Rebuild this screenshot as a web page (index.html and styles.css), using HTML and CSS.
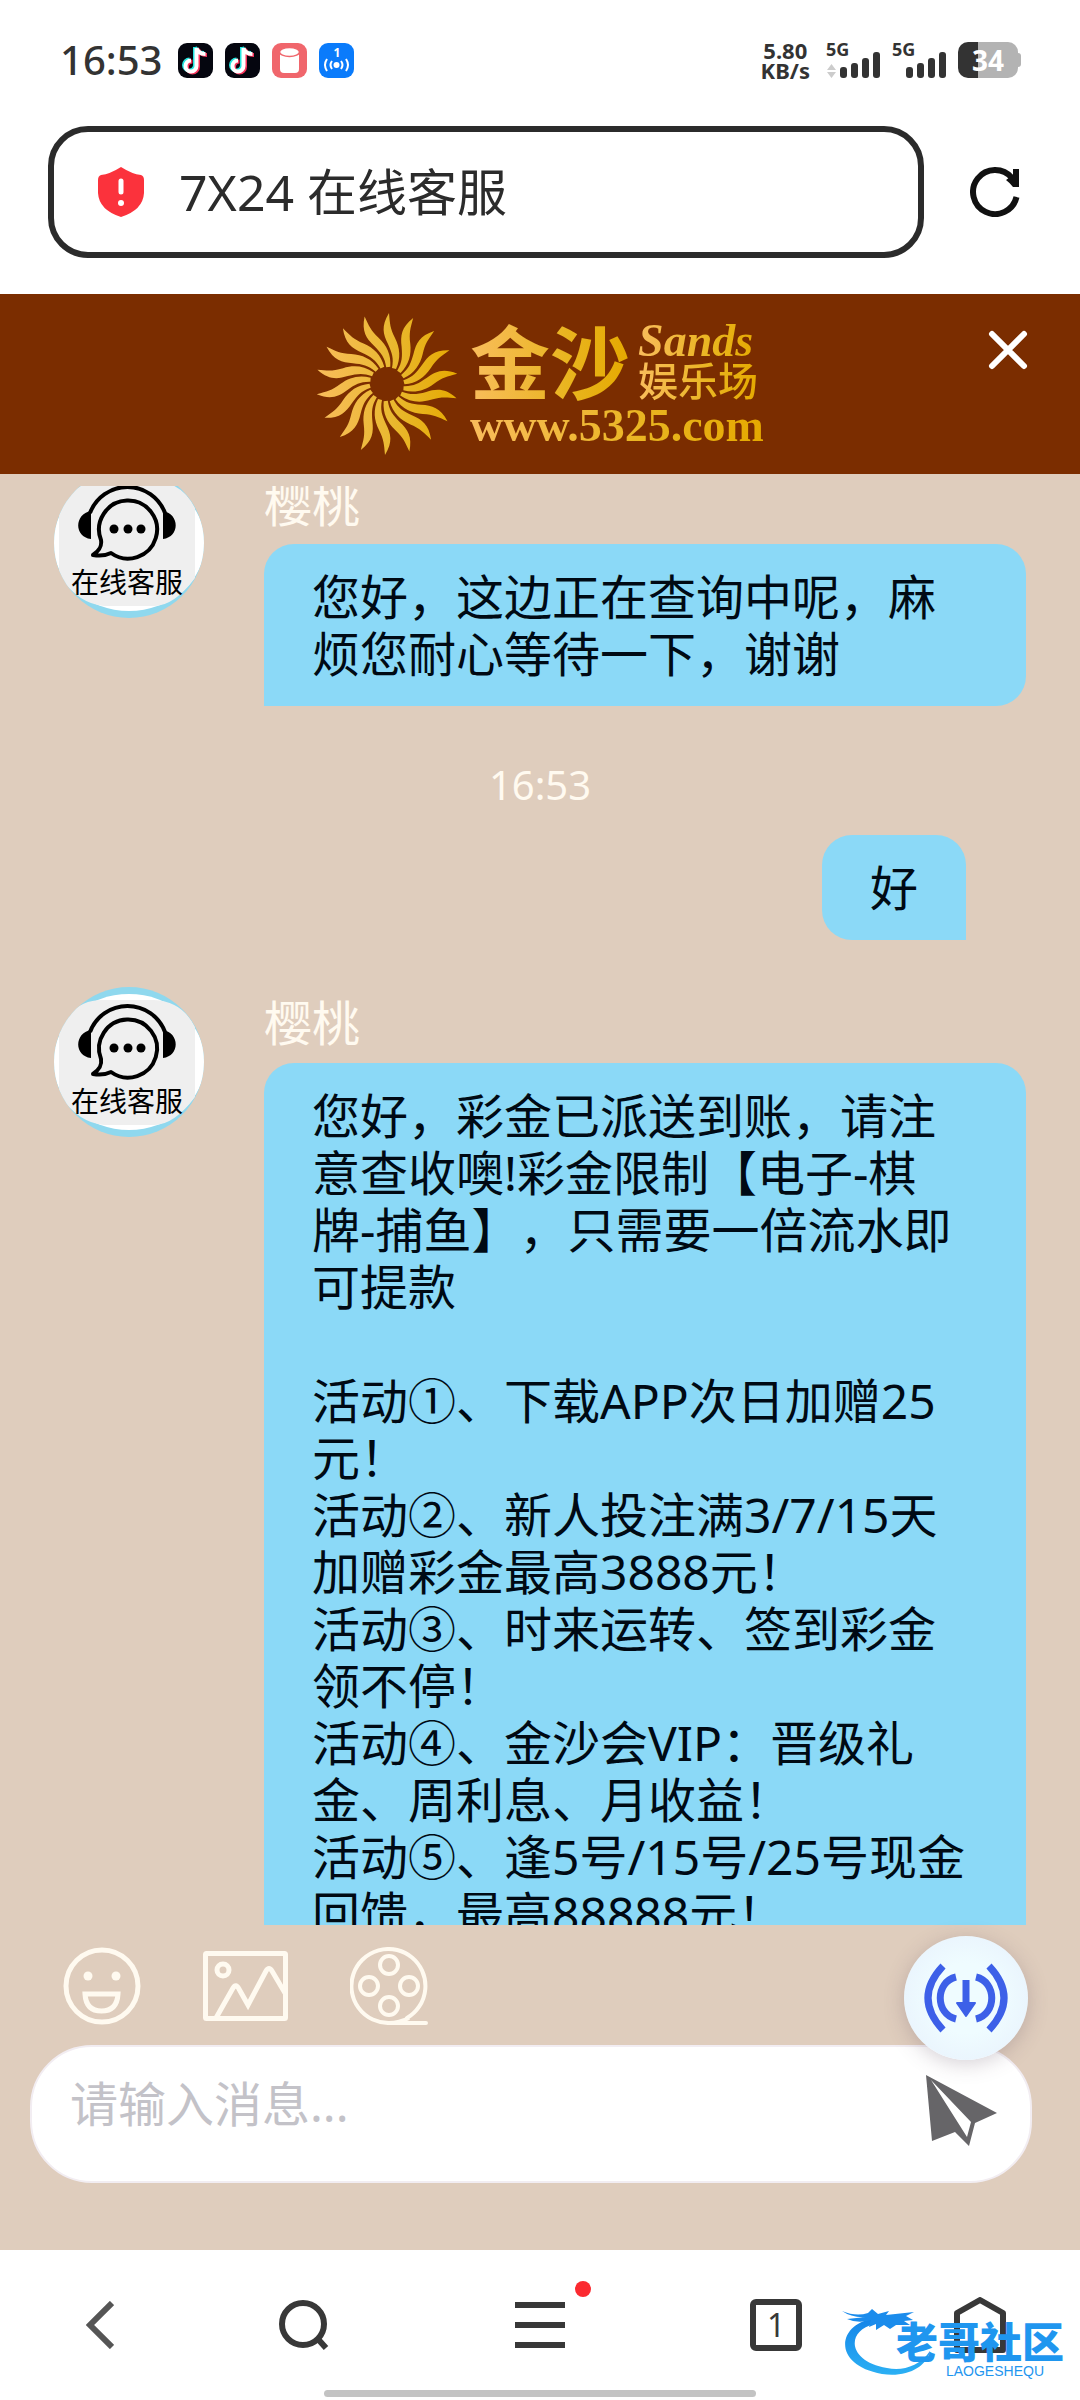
FILE: index.html
```html
<!DOCTYPE html>
<html lang="zh-CN">
<head>
  <meta charset="UTF-8" />
  <meta name="viewport" content="width=device-width, initial-scale=1.0"/>
  <title>7X24 在线客服</title>
  <link rel="stylesheet" href="styles.css">
</head>
<body>

<!-- Shared shapes -->
<svg class="defs" width="0" height="0" aria-hidden="true">
  <defs>
    <symbol id="douyin" viewBox="0 0 35 35">
      <rect width="35" height="35" rx="9" fill="#05060f"/>
      <g fill="none" stroke-width="4">
        <path d="M18 5v18a5.500 5.500 0 1 1-5.500-5.500M18 5c1 4 4 6 9 6" stroke="#25e6e0" transform="translate(-1 -1)"/>
        <path d="M18 5v18a5.500 5.500 0 1 1-5.500-5.500M18 5c1 4 4 6 9 6" stroke="#f6345c" transform="translate(2 1)"/>
        <path d="M18 5v18a5.500 5.500 0 1 1-5.500-5.500M18 5c1 4 4 6 9 6" stroke="#fff" transform="translate(.5 0)"/>
      </g>
    </symbol>

    <symbol id="bars" viewBox="0 0 40 26">
      <g fill="#333">
        <rect x="0" y="15" width="7" height="11" rx="3"/>
        <rect x="11" y="11" width="7" height="15" rx="3"/>
        <rect x="22" y="6" width="7" height="20" rx="3"/>
        <rect x="33" y="0" width="7" height="26" rx="3"/>
      </g>
    </symbol>

    <clipPath id="round"><circle cx="75" cy="75" r="75"/></clipPath>
    <symbol id="agent" viewBox="0 0 150 150">
      <g clip-path="url(#round)">
        <rect width="150" height="150" fill="#8fd8ee"/>
        <ellipse cx="75" cy="75" rx="76" ry="68" fill="#fff"/>
        <path d="M5 40Q22 12 50 13H100Q128 14 141 40V110Q120 138 100 138H50Q25 136 5 108Z" fill="#efefef"/>
      </g>
      <path d="M36 45A40 40 0 0 1 111 45" fill="none" stroke="#000" stroke-width="4"/>
      <path d="M37 43V71C20 69 20 46 37 43ZM109 43V71C126 69 126 46 109 43Z"/>
      <path d="M47 72A29 29 0 1 1 57 85C51 88 45 88 39 87C46 82 48 78 47 72Z" fill="none" stroke="#000" stroke-width="4" stroke-linejoin="round"/>
      <circle cx="60" cy="61" r="4.500"/><circle cx="74" cy="61" r="4.500"/><circle cx="87" cy="61" r="4.500"/>
      <text class="agent-text" x="73" y="125" text-anchor="middle">在线客服</text>
    </symbol>

    <path id="ray" d="M2-71C-6-58-4-50 1-40C5-31 7-26 5-16L9-15C14-26 13-36 8-46C3-56 3-60 2-71Z" fill="#fff"/>
    <linearGradient id="gold">
      <stop offset="0" stop-color="#f9bd5c"/>
      <stop offset=".5" stop-color="#eab933"/>
      <stop offset="1" stop-color="#e5a900"/>
    </linearGradient>
    <mask id="rays" maskUnits="userSpaceOnUse" x="-71" y="-72" width="142" height="144">
      <use href="#ray"/>
      <use href="#ray" transform="rotate(20)"/>
      <use href="#ray" transform="rotate(40)"/>
      <use href="#ray" transform="rotate(60)"/>
      <use href="#ray" transform="rotate(80)"/>
      <use href="#ray" transform="rotate(100)"/>
      <use href="#ray" transform="rotate(120)"/>
      <use href="#ray" transform="rotate(140)"/>
      <use href="#ray" transform="rotate(160)"/>
      <use href="#ray" transform="rotate(180)"/>
      <use href="#ray" transform="rotate(200)"/>
      <use href="#ray" transform="rotate(220)"/>
      <use href="#ray" transform="rotate(240)"/>
      <use href="#ray" transform="rotate(260)"/>
      <use href="#ray" transform="rotate(280)"/>
      <use href="#ray" transform="rotate(300)"/>
      <use href="#ray" transform="rotate(320)"/>
      <use href="#ray" transform="rotate(340)"/>
    </mask>
  </defs>
</svg>

<div class="phone">

  <div class="status-bar">
    <div class="status-left">
      <span class="clock">16:53</span>
      <svg class="app-icon"><use href="#douyin"/></svg>
      <svg class="app-icon"><use href="#douyin"/></svg>
      <svg class="app-icon" viewBox="0 0 35 35">
        <rect width="35" height="35" rx="9" fill="#f0666c"/>
        <path d="M8 8v18q0 4 4 4h11q4 0 4-4V8z" fill="#fff"/>
        <ellipse cx="17.500" cy="9" rx="10" ry="4.500" fill="#fff" stroke="#f0666c" stroke-width="1.500"/>
      </svg>
      <svg class="app-icon" viewBox="0 0 35 35">
        <rect width="35" height="35" rx="9" fill="#0a7bfb"/>
        <text class="app-count" x="18" y="14" text-anchor="middle">1</text>
        <circle cx="17.500" cy="22" r="3" fill="#fff"/>
        <path d="M13 18q-3 4 0 8M22 18q3 4 0 8M8 16q-4 6 0 12M27 16q4 6 0 12" fill="none" stroke="#fff" stroke-width="2"/>
      </svg>
    </div>
    <div class="status-right">
      <div class="speed"><span>5.80</span><span>KB/s</span></div>
      <div class="signal">
        <span>5G</span>
        <svg class="updown" viewBox="0 0 9 14"><path d="M4.500 0L9 6H0ZM4.500 14L9 8H0Z" fill="#ccc"/></svg>
        <svg class="bars"><use href="#bars"/></svg>
      </div>
      <div class="signal">
        <span>5G</span>
        <svg class="bars"><use href="#bars"/></svg>
      </div>
      <div class="battery">34</div>
    </div>
  </div>

  <div class="address-row">
    <label class="address">
      <svg class="shield" viewBox="0 0 46 50">
        <path d="M23 0Q34 7 43 8Q46 9 46 13V26Q45 43 23 50Q1 43 0 26V13Q0 9 3 8Q12 7 23 0Z" fill="#fb323c"/>
        <path d="M23 14V25" stroke="#fff" stroke-width="5" stroke-linecap="round"/>
        <circle cx="23" cy="36" r="3" fill="#fff"/>
      </svg>
      <input type="text" value="7X24 在线客服" aria-label="地址栏">
    </label>
    <button class="reload" aria-label="刷新">
      <svg viewBox="0 0 50 50">
        <path d="M46.500 30A22 22 0 1 1 42 11" fill="none" stroke="#111" stroke-width="6"/>
        <path d="M43 2H49V20H43Q40 16 36 13L43 8Z" fill="#111"/>
      </svg>
    </button>
  </div>

  <header class="banner">
    <div class="logo">
      <svg class="sun" viewBox="-71 -72 142 144">
        <rect x="-71" y="-72" width="142" height="144" fill="url(#gold)" mask="url(#rays)"/>
      </svg>
      <div class="logo-text">
        <div class="logo-top">
          <span class="logo-main">金沙</span>
          <div class="logo-side">
            <span class="logo-en">Sands</span>
            <span class="logo-sub">娱乐场</span>
          </div>
        </div>
        <span class="logo-url">www.5325.com</span>
      </div>
    </div>
    <button class="close" aria-label="关闭">
      <svg viewBox="0 0 40 40"><path d="M4 4L36 36M36 4L4 36" stroke="#fff" stroke-width="6" stroke-linecap="round"/></svg>
    </button>
  </header>

  <main class="chat">
    <div class="message-view">
      <div class="message-list">
        <div class="message">
          <svg class="avatar"><use href="#agent"/></svg>
          <div class="message-body">
            <div class="name">樱桃</div>
            <div class="bubble">您好，这边正在查询中呢，麻<br>烦您耐心等待一下，谢谢</div>
          </div>
        </div>

        <div class="time">16:53</div>

        <div class="message mine">
          <div class="bubble">好</div>
        </div>

        <div class="message">
          <svg class="avatar"><use href="#agent"/></svg>
          <div class="message-body">
            <div class="name">樱桃</div>
            <div class="bubble">您好，彩金已派送到账，请注<br>意查收噢!彩金限制【电子-棋<br>牌-捕鱼】，只需要一倍流水即<br>可提款<br><br>活动①、下载APP次日加赠25<br>元！<br>活动②、新人投注满3/7/15天<br>加赠彩金最高3888元！<br>活动③、时来运转、签到彩金<br>领不停！<br>活动④、金沙会VIP：晋级礼<br>金、周利息、月收益！<br>活动⑤、逢5号/15号/25号现金<br>回馈，最高88888元！</div>
          </div>
        </div>
      </div>
    </div>

    <div class="composer">
      <div class="tools">
        <button aria-label="表情">
          <svg width="78" height="78" viewBox="0 0 78 78" fill="none" stroke="#fffaf0" stroke-width="5">
            <circle cx="39" cy="39" r="36"/>
            <path d="M22 47H55Q54 64 38.500 64Q23 64 22 47Z"/>
            <circle cx="25" cy="29" r="4.500" fill="#fffaf0" stroke="none"/>
            <circle cx="53" cy="29" r="4.500" fill="#fffaf0" stroke="none"/>
          </svg>
        </button>
        <button aria-label="图片">
          <svg width="85" height="70" viewBox="0 0 85 70" fill="none" stroke="#fffaf0" stroke-width="5">
            <rect x="2.500" y="2.500" width="80" height="65" rx="1"/>
            <circle cx="20" cy="19" r="6"/>
            <path d="M13 67L30 37Q33 32 36 38L45 54L63 20Q66 15 69 20L82 42"/>
          </svg>
        </button>
        <button aria-label="视频">
          <svg width="78" height="78" viewBox="0 0 78 78" fill="none" stroke="#fffaf0" stroke-width="4">
            <path d="M76 76H39A37 37 0 1 1 57 71" stroke-linecap="round"/>
            <path d="M39 76Q49 76 59 71"/>
            <circle cx="39" cy="18" r="9"/>
            <circle cx="19" cy="39" r="9"/>
            <circle cx="59" cy="39" r="9"/>
            <circle cx="39" cy="59" r="9"/>
          </svg>
        </button>
      </div>
      <div class="input-box">
        <textarea rows="1" placeholder="请输入消息..." aria-label="消息"></textarea>
        <button class="send" aria-label="发送">
          <svg viewBox="0 0 71 71">
            <path d="M0 0L71 38L49 48L43 71L29 57L6 66ZM5 5L41 62L45 47Z" fill="#666568" fill-rule="evenodd"/>
          </svg>
        </button>
        <button class="floating" aria-label="下载">
          <svg viewBox="0 0 84 70" fill="none" stroke="#3d60e8" stroke-width="7">
            <path d="M19 3Q-11 35 19 67M65 3Q95 35 65 67"/>
            <path d="M32 14C11 19 11 51 32 56M52 14C73 19 73 51 52 56"/>
            <path d="M42 17V42"/>
            <path d="M33 40H51L42 53Z" fill="#3d60e8" stroke-width="2" stroke-linejoin="round"/>
          </svg>
        </button>
      </div>
    </div>
  </main>

  <nav class="bottom-nav">
    <button aria-label="后退">
      <svg width="28" height="48" viewBox="0 0 28 48"><path d="M26 2L4 24L26 46" fill="none" stroke="#555" stroke-width="6"/></svg>
    </button>
    <button aria-label="搜索">
      <svg width="50" height="50" viewBox="0 0 50 50" fill="none" stroke="#383838" stroke-width="6">
        <circle cx="24" cy="24" r="21"/><path d="M38 38L47 48"/>
      </svg>
    </button>
    <button class="menu" aria-label="菜单">
      <svg width="50" height="46" viewBox="0 0 50 46"><path d="M0 3H50M0 23H50M0 43H50" stroke="#383838" stroke-width="6"/></svg>
      <span class="dot"></span>
    </button>
    <button aria-label="标签页"><span class="tab-count">1</span></button>
    <button aria-label="主页">
      <svg width="52" height="56" viewBox="0 0 52 56"><path d="M3 16L26 3L49 16V53H3Z" fill="none" stroke="#383838" stroke-width="6" stroke-linejoin="round"/></svg>
    </button>

    <div class="watermark">
      <svg class="dragon" viewBox="0 0 90 70">
        <defs>
          <linearGradient id="sea" x2="0" y2="1">
            <stop offset="0" stop-color="#1484e8"/>
            <stop offset="1" stop-color="#2bb0f4"/>
          </linearGradient>
        </defs>
        <path d="M36 11C-5 14-12 58 40 67C64 71 85 60 88 44C77 60 60 64 45 61C5 54 4 24 32 17Z" fill="url(#sea)"/>
        <path d="M0 4Q14 10 26 6L30 2L36 7L47 4L44 8L72 5L64 9L71 13L62 14L68 18L54 18L48 22L42 18L34 23L34 17L27 20L29 13Q16 17 5 12L24 10Q10 11 0 4Z" fill="#1b8cec"/>
      </svg>
      <div class="watermark-text">
        <strong>老哥社区</strong>
        <small>LAOGESHEQU</small>
      </div>
    </div>
    <div class="home-bar"></div>
  </nav>

</div>

</body>
</html>
```
FILE: styles.css
```css
* {
  box-sizing: border-box;
}

html, body {
  margin: 0;
  padding: 0;
  height: 100%;
  font-family: "Noto Sans", "Noto Sans CJK SC", sans-serif;
  background: #fff;
  color: #333;
}

button {
  display: flex;
  align-items: center;
  justify-content: center;
  padding: 0;
  border: none;
  background: none;
  cursor: pointer;
}

svg {
  display: block;
}

.defs {
  position: absolute;
}

.phone {
  display: flex;
  flex-direction: column;
  height: 100vh;
  overflow: hidden;
}

/* status bar */
.status-bar {
  display: flex;
  align-items: center;
  justify-content: space-between;
  height: 120px;
  padding: 0 62px 0 60px;
}

.status-left,
.status-right {
  display: flex;
  align-items: center;
  gap: 12px;
}

.clock {
  margin-right: 4px;
  font-size: 40px;
  line-height: 40px;
  font-weight: 500;
}

.app-icon {
  width: 35px;
  height: 35px;
}

.app-count {
  font-size: 12px;
  font-weight: bold;
  fill: #fff;
}

.speed {
  display: flex;
  flex-direction: column;
  align-items: center;
  margin-right: 4px;
  font-size: 22px;
  line-height: 20px;
  font-weight: bold;
}

.signal {
  position: relative;
  display: flex;
  align-items: flex-end;
  justify-content: flex-end;
  gap: 4px;
  width: 54px;
  height: 36px;
}

.signal span {
  position: absolute;
  top: 0;
  left: 0;
  font-size: 18px;
  line-height: 14px;
  font-weight: bold;
}

.bars {
  width: 40px;
  height: 26px;
}

.updown {
  width: 9px;
  height: 14px;
}

.battery {
  position: relative;
  width: 60px;
  height: 36px;
  border-radius: 10px;
  background: linear-gradient(90deg, #333 34%, #b3b3b3 34%);
  color: #fff;
  font-size: 28px;
  line-height: 36px;
  font-weight: bold;
  text-align: center;
}

.battery::after {
  content: "";
  position: absolute;
  top: 11px;
  right: -3px;
  width: 3px;
  height: 14px;
  border-radius: 0 3px 3px 0;
  background: #b3b3b3;
}

/* address */
.address-row {
  display: flex;
  align-items: center;
  gap: 46px;
  padding: 6px 60px 36px 48px;
}

.address {
  display: flex;
  flex: 1;
  align-items: center;
  gap: 35px;
  min-width: 0;
  height: 132px;
  padding: 0 44px;
  border: 6px solid #2b2b2b;
  border-radius: 40px;
}

.shield {
  flex: none;
  width: 46px;
  height: 50px;
}

.address input {
  flex: 1;
  min-width: 0;
  padding: 0;
  border: none;
  outline: none;
  background: none;
  color: #2b2b2b;
  font-family: inherit;
  font-size: 50px;
  line-height: 60px;
}

.reload,
.reload svg {
  flex: none;
  width: 50px;
  height: 50px;
}

/* banner */
.banner {
  position: relative;
  display: flex;
  align-items: center;
  justify-content: center;
  height: 180px;
  background: #7b2d00;
}

.logo {
  display: flex;
  align-items: center;
  gap: 12px;
}

.sun {
  width: 142px;
  height: 144px;
}

.logo-text {
  display: flex;
  flex-direction: column;
  gap: 4px;
}

.logo-top {
  display: flex;
  gap: 8px;
}

.logo-side {
  display: flex;
  flex-direction: column;
}

.logo-main,
.logo-en,
.logo-sub,
.logo-url {
  background: linear-gradient(90deg, #f9bd5c, #e9b520 60%, #e5a900);
  -webkit-background-clip: text;
  background-clip: text;
  color: transparent;
  font-weight: bold;
}

.logo-main {
  font-size: 80px;
  line-height: 80px;
}

.logo-en {
  font-family: "Liberation Serif", serif;
  font-size: 46px;
  line-height: 38px;
  font-style: italic;
}

.logo-sub {
  font-size: 40px;
  line-height: 42px;
  font-weight: 500;
}

.logo-url {
  font-family: "Liberation Serif", serif;
  font-size: 46px;
  line-height: 40px;
}

.close {
  position: absolute;
  top: 36px;
  right: 52px;
}

.close svg {
  width: 40px;
  height: 40px;
}

/* chat */
.chat {
  display: flex;
  flex: 1;
  flex-direction: column;
  min-height: 0;
  padding-top: 12px;
  background: #dfcdbd;
}

.message-view {
  flex: 1;
  min-height: 0;
  overflow: hidden;
}

/* scrolled part way into the first message */
.message-list {
  margin-top: -18px;
  padding: 0 54px;
}

.message {
  display: flex;
  gap: 60px;
  font-size: 48px;
  line-height: 57px;
}

.avatar {
  flex: none;
  width: 150px;
  height: 150px;
}

.agent-text {
  font-family: "Noto Sans CJK SC", sans-serif;
  font-size: 28px;
}

.message-body {
  flex: 1;
  padding-top: 7px;
}

.name {
  margin-bottom: 12px;
  color: #fffaf0;
}

.bubble {
  padding: 24px 48px;
  border-radius: 30px 30px 30px 0;
  background: #8bd9f7;
  color: #000a14;
  text-spacing-trim: space-all;
}

.time {
  margin: 50px 0 22px;
  color: #fffaf0;
  font-size: 40px;
  line-height: 57px;
  text-align: center;
}

.mine {
  justify-content: flex-end;
  margin-bottom: 47px;
  padding-right: 60px;
}

.mine .bubble {
  border-radius: 30px 30px 0 30px;
}

/* composer */
.composer {
  padding: 22px 48px 67px 30px;
}

.tools {
  display: flex;
  align-items: center;
  gap: 62px;
  margin-bottom: 20px;
  padding-left: 33px;
}

.input-box {
  position: relative;
  display: flex;
  align-items: flex-start;
  height: 138px;
  padding: 28px 33px 28px 38px;
  border: 2px solid #f2edf2;
  border-radius: 62px;
  background: #fff;
}

.input-box textarea {
  flex: 1;
  padding: 0;
  border: none;
  outline: none;
  resize: none;
  background: none;
  font-family: inherit;
  font-size: 48px;
  line-height: 57px;
}

.input-box textarea::placeholder {
  color: #c3c2c8;
}

.send,
.send svg {
  width: 71px;
  height: 71px;
}

.floating {
  position: absolute;
  top: -111px;
  right: 2px;
  width: 124px;
  height: 124px;
  border-radius: 50%;
  background: radial-gradient(#effcff 40%, #e6effc);
  box-shadow: 0 4px 20px rgba(90, 70, 90, 0.25);
}

.floating svg {
  width: 84px;
  height: 70px;
}

/* bottom nav */
.bottom-nav {
  position: relative;
  display: grid;
  grid-template-columns: 8fr 11fr 11fr 11fr 8fr;
  align-items: center;
  height: 150px;
  padding: 0 14px;
  background: #fff;
}

.menu {
  position: relative;
}

.dot {
  position: absolute;
  top: -21px;
  left: calc(50% + 35px);
  width: 16px;
  height: 16px;
  border-radius: 50%;
  background: #fb2a30;
}

.tab-count {
  width: 52px;
  height: 52px;
  border: 6px solid #383838;
  border-radius: 6px;
  color: #383838;
  font-family: "Noto Sans", sans-serif;
  font-size: 32px;
  line-height: 40px;
}

.watermark {
  position: absolute;
  right: 16px;
  bottom: 22px;
  display: flex;
  width: 222px;
  height: 74px;
}

.dragon {
  position: absolute;
  left: 0;
  top: 3px;
  width: 90px;
  height: 70px;
}

.watermark-text {
  position: relative;
  display: flex;
  flex: 1;
  flex-direction: column;
  align-items: flex-end;
  justify-content: flex-end;
  color: #1f96ef;
}

.watermark-text strong {
  font-size: 42px;
  line-height: 44px;
  font-weight: 900;
}

.watermark-text small {
  padding-right: 20px;
  font-family: "Liberation Sans", sans-serif;
  font-size: 14px;
  line-height: 14px;
}

.home-bar {
  position: absolute;
  bottom: 3px;
  left: 30%;
  width: 40%;
  height: 7px;
  border-radius: 4px;
  background: #c3c3c3;
}
```
